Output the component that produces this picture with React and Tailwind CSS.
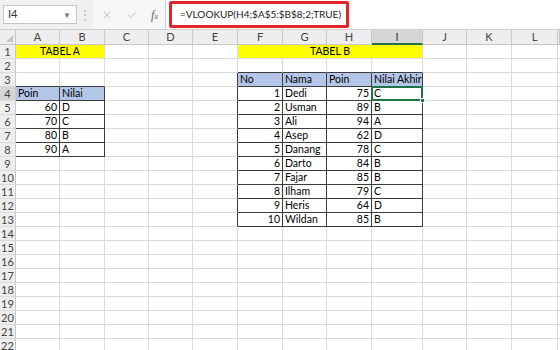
import {X, Check} from "lucide-react";

const COLS = ["A", "B", "C", "D", "E", "F", "G", "H", "I", "J", "K", "L", ""];
const ROWS = Array.from({length: 22}, (_, i) => i + 1);

const tableA = {
  4: ["Poin", "Nilai"],
  5: [60, "D"],
  6: [70, "C"],
  7: [80, "B"],
  8: [90, "A"],
};

const tableB = {
  3: ["No", "Nama", "Poin", "Nilai Akhir"],
  4: [1, "Dedi", 75, "C"],
  5: [2, "Usman", 89, "B"],
  6: [3, "Ali", 94, "A"],
  7: [4, "Asep", 62, "D"],
  8: [5, "Danang", 78, "C"],
  9: [6, "Darto", 84, "B"],
  10: [7, "Fajar", 85, "B"],
  11: [8, "Ilham", 79, "C"],
  12: [9, "Heris", 64, "D"],
  13: [10, "Wildan", 85, "B"],
};

const GRID = "grid grid-cols-[16px_44px_45px_44px_44px_45px_45px_44px_45px_51px_44px_45px_46px_1fr]";

const inTable = (r, c) =>
  (r >= 4 && r <= 8 && c >= 0 && c <= 1) || (r >= 3 && r <= 13 && c >= 5 && c <= 8);

// pick full class strings so tailwind sees them
const borderCls = (r, c) => {
  const right = inTable(r, c) || inTable(r, c + 1);
  const bottom = inTable(r, c) || inTable(r + 1, c);
  if (right && bottom) return "border-r-[#3c3c3c] border-b-[#3c3c3c]";
  if (right) return "border-r-[#3c3c3c] border-b-[#dadada]";
  if (bottom) return "border-r-[#dadada] border-b-[#3c3c3c]";
  return "border-r-[#dadada] border-b-[#dadada]";
};

function cellValue(r, c) {
  if (tableA[r] && c <= 1) return tableA[r][c];
  if (tableB[r] && c >= 5 && c <= 8) return tableB[r][c - 5];
  return null;
}

function Cell({r, c}) {
  const v = cellValue(r, c);
  const header = (r === 4 && c <= 1) || (r === 3 && c >= 5 && c <= 8);
  const num = typeof v === "number";
  const selected = r === 4 && c === 8;
  return (
    <div
      className={`relative h-[14px] border-r border-b px-[2px] text-[10.5px] leading-[13px] whitespace-nowrap overflow-visible ${borderCls(r, c)} ${
        header ? "bg-[#b4c6e7]" : ""
      } ${num ? "text-right" : "text-left"}`}
    >
      {v}
      {selected && (
        <div className="absolute -left-px -top-px w-[52px] h-[15px] border-2 border-[#217346] z-10">
          <div className="absolute -right-[4px] -bottom-[4px] w-[5px] h-[5px] bg-[#217346] border border-white"/>
        </div>
      )}
    </div>
  );
}

function RowHeader({n}) {
  return (
    <div
      className={`h-[14px] border-r border-b border-r-[#c8c8c8] border-b-[#dadada] text-center text-[11px] leading-[13px] text-[#444] ${
        n === 4 ? "bg-[#d6d6d6]" : "bg-[#eeeeee]"
      }`}
    >
      {n}
    </div>
  );
}

function Row({n}) {
  if (n === 1) {
    return (
      <div className={GRID}>
        <RowHeader n={1}/>
        <div className="col-span-2 h-[14px] bg-[#ffff00] border-r border-b border-r-[#dadada] border-b-[#dadada] text-center text-[10.5px] leading-[13px]">
          TABEL A
        </div>
        {[2, 3, 4].map((c) => <Cell key={c} r={1} c={c}/>)}
        <div className="col-span-4 h-[14px] bg-[#ffff00] border-r border-b border-r-[#dadada] border-b-[#dadada] text-center text-[10.5px] leading-[13px]">
          TABEL B
        </div>
        {[9, 10, 11, 12].map((c) => <Cell key={c} r={1} c={c}/>)}
      </div>
    );
  }
  return (
    <div className={GRID}>
      <RowHeader n={n}/>
      {COLS.map((_, c) => <Cell key={c} r={n} c={c}/>)}
    </div>
  );
}

export default function App() {
  return (
    <div className="w-[560px] h-[350px] overflow-hidden bg-white text-black font-['Lato','Liberation_Sans',sans-serif]">
      {/* formula bar */}
      <div className="flex items-stretch h-[30px] bg-[#f0f0f0] border-b border-[#d0d0d0]">
        <div className="ml-[3px] my-[5px] w-[74px] bg-white border border-[#c6c6c6] flex items-center justify-between pl-[4px] pr-[5px]">
          <span className="text-[11px] text-[#333]">I4</span>
          <span className="text-[8px] text-[#777]">▼</span>
        </div>
        <div className="w-[16px] flex items-center justify-center text-[12px] text-[#b8b8b8]">⋮</div>
        <div className="w-[72px] bg-[#f7f7f7] flex items-center pl-[8px] gap-[13px] text-[#b5b5b5]">
          <X size={12} strokeWidth={1.5}/>
          <Check size={12} strokeWidth={1.5}/>
          <span className="font-['Liberation_Serif',serif] italic text-[12px] text-[#666]">f<span className="text-[9px]">x</span></span>
        </div>
        <div className="relative flex-1 bg-white border-l border-[#d0d0d0] flex items-center pl-[14px]">
          <span className="text-[10px] text-[#222]">=VLOOKUP(H4;$A$5:$B$8;2;TRUE)</span>
          <div className="absolute left-[3px] top-[1px] w-[180px] h-[27px] border-[3px] border-[#e2242b] rounded-[2px]"/>
        </div>
      </div>

      {/* column headers */}
      <div className={GRID}>
        <div className="relative h-[15px] bg-[#eeeeee] border-r border-b border-r-[#c8c8c8] border-b-[#c8c8c8]">
          <div className="absolute right-[2px] bottom-[2px] w-0 h-0 border-l-[7px] border-l-transparent border-b-[7px] border-b-[#c4c4c4]"/>
        </div>
        {COLS.map((l, i) =>
          l === "I" ? (
            <div key={i} className="h-[15px] bg-[#d6d6d6] border-r border-r-[#c8c8c8] border-b-2 border-b-[#217346] text-center text-[11px] leading-[14px] text-[#333]">
              {l}
            </div>
          ) : (
            <div key={i} className="h-[15px] bg-[#eeeeee] border-r border-b border-r-[#c8c8c8] border-b-[#c8c8c8] text-center text-[11px] leading-[14px] text-[#444]">
              {l}
            </div>
          )
        )}
      </div>

      {ROWS.map((n) => <Row key={n} n={n}/>)}
    </div>
  );
}
